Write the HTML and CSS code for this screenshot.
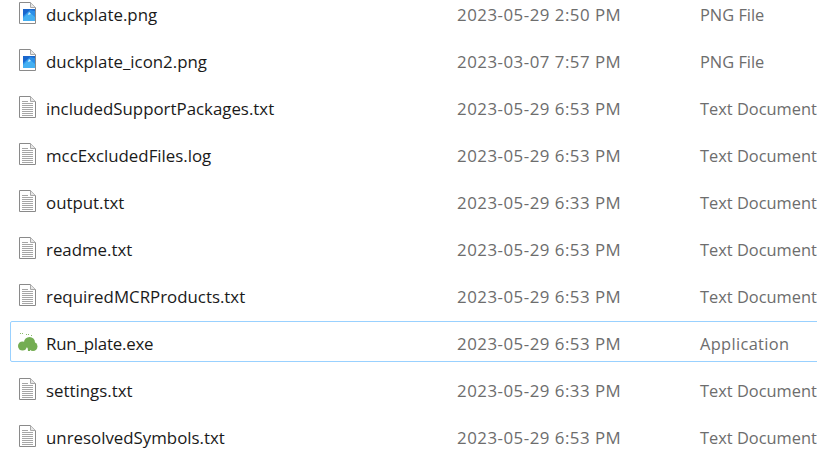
FILE: index.html
```html
<!doctype html>
<html>
<head>
<meta charset="utf-8">
<title>Files</title>
<link rel="stylesheet" href="styles.css">
</head>
<body>

<svg class="defs" width="0" height="0">
  <symbol id="doc" viewBox="0 0 17 22">
    <path d="M.5.5H11.5L16.500 5.500V21.500H.5Z" fill="#fff" stroke="#8a8a8a"/>
    <path d="M11.5.5V5.500H16.500" fill="#e6e6e6" stroke="#a8a8a8"/>
    <path d="M3 5.500H9M3 7.500H14M3 9.500H14M3 11.500H14M3 13.500H14M3 15.500H14M3 17.500H14M3 19.500H14" stroke="#a6a6a6"/>
  </symbol>
  <symbol id="pic" viewBox="0 0 17 22">
    <path d="M.5.5H11.5L16.500 5.500V21.500H.5Z" fill="#fff" stroke="#8a8a8a"/>
    <path d="M11.5.5V5.500H16.500" fill="#e6e6e6" stroke="#a8a8a8"/>
    <rect x="4" y="7" width="12" height="12" fill="#2b8fe8"/>
    <path d="M4 7H16V9L11 8 4 14Z" fill="#1a66cc"/>
    <path d="M4 19V16L10 10 16 15V19Z" fill="#45b0f2"/>
    <path d="M10 10L12 12 9 13Z" fill="#d8f0ff"/>
  </symbol>
  <symbol id="app" viewBox="0 0 21 22">
    <path d="M3 2.500H7M9 3.500H13M14 4.500H16" stroke="#8cbb6a" stroke-dasharray="1 1"/>
    <circle cx="12.500" cy="11.500" r="5.500" fill="#74ad52"/>
    <circle cx="5.500" cy="15" r="4.500" fill="#74ad52"/>
    <circle cx="16" cy="15.500" r="4.500" fill="#74ad52"/>
    <path d="M10 12L11 20H13V12Z" fill="#74ad52"/>
  </symbol>
</svg>

<ul class="file-list">
  <li class="file-row">
    <svg class="file-icon"><use href="#pic"/></svg>
    <span class="file-name">duckplate.png</span>
    <span class="file-date">2023-05-29 2:50 PM</span>
    <span class="file-type">PNG File</span>
  </li>
  <li class="file-row">
    <svg class="file-icon"><use href="#pic"/></svg>
    <span class="file-name">duckplate_icon2.png</span>
    <span class="file-date">2023-03-07 7:57 PM</span>
    <span class="file-type">PNG File</span>
  </li>
  <li class="file-row">
    <svg class="file-icon"><use href="#doc"/></svg>
    <span class="file-name">includedSupportPackages.txt</span>
    <span class="file-date">2023-05-29 6:53 PM</span>
    <span class="file-type">Text Document</span>
  </li>
  <li class="file-row">
    <svg class="file-icon"><use href="#doc"/></svg>
    <span class="file-name">mccExcludedFiles.log</span>
    <span class="file-date">2023-05-29 6:53 PM</span>
    <span class="file-type">Text Document</span>
  </li>
  <li class="file-row">
    <svg class="file-icon"><use href="#doc"/></svg>
    <span class="file-name">output.txt</span>
    <span class="file-date">2023-05-29 6:33 PM</span>
    <span class="file-type">Text Document</span>
  </li>
  <li class="file-row">
    <svg class="file-icon"><use href="#doc"/></svg>
    <span class="file-name">readme.txt</span>
    <span class="file-date">2023-05-29 6:53 PM</span>
    <span class="file-type">Text Document</span>
  </li>
  <li class="file-row">
    <svg class="file-icon"><use href="#doc"/></svg>
    <span class="file-name">requiredMCRProducts.txt</span>
    <span class="file-date">2023-05-29 6:53 PM</span>
    <span class="file-type">Text Document</span>
  </li>
  <li class="file-row selected">
    <svg class="file-icon wide"><use href="#app"/></svg>
    <span class="file-name">Run_plate.exe</span>
    <span class="file-date">2023-05-29 6:53 PM</span>
    <span class="file-type">Application</span>
  </li>
  <li class="file-row">
    <svg class="file-icon"><use href="#doc"/></svg>
    <span class="file-name">settings.txt</span>
    <span class="file-date">2023-05-29 6:33 PM</span>
    <span class="file-type">Text Document</span>
  </li>
  <li class="file-row">
    <svg class="file-icon"><use href="#doc"/></svg>
    <span class="file-name">unresolvedSymbols.txt</span>
    <span class="file-date">2023-05-29 6:53 PM</span>
    <span class="file-type">Text Document</span>
  </li>
</ul>

</body>
</html>
```

FILE: styles.css
```css
html, body { margin: 0; padding: 0; height: 465px; overflow: hidden; background-color: #fff; }
* { font-family: "Open Sans", "Noto Sans", sans-serif; }

.defs { display: block; }

/* list is scrolled, first row is cut off by the window top */
.file-list { list-style: none; margin: -8px 0 0 10px; padding: 0; display: flex; flex-direction: column; gap: 6px; }

.file-row { height: 39px; width: 830px; border: 1px solid transparent; display: grid; grid-template-columns: 35px 411px 243px 1fr; align-items: center; font-size: 16.850px; white-space: nowrap; }
.file-row.selected { border-color: #99d1ff; border-radius: 2px; }

.file-icon { width: 17px; height: 22px; margin: 1px 0 0 8px; display: block; }
.file-icon.wide { width: 21px; margin-left: 6px; }

.file-name { color: #1a1a1a; padding-top: 4px; }
.file-date, .file-type { color: #6d6d6d; padding-top: 4px; }
.file-date { letter-spacing: .5px; }
.file-type { font-size: 16.400px; }
.selected .file-type { letter-spacing: .35px; }
.selected .file-name { letter-spacing: -.2px; }
```
